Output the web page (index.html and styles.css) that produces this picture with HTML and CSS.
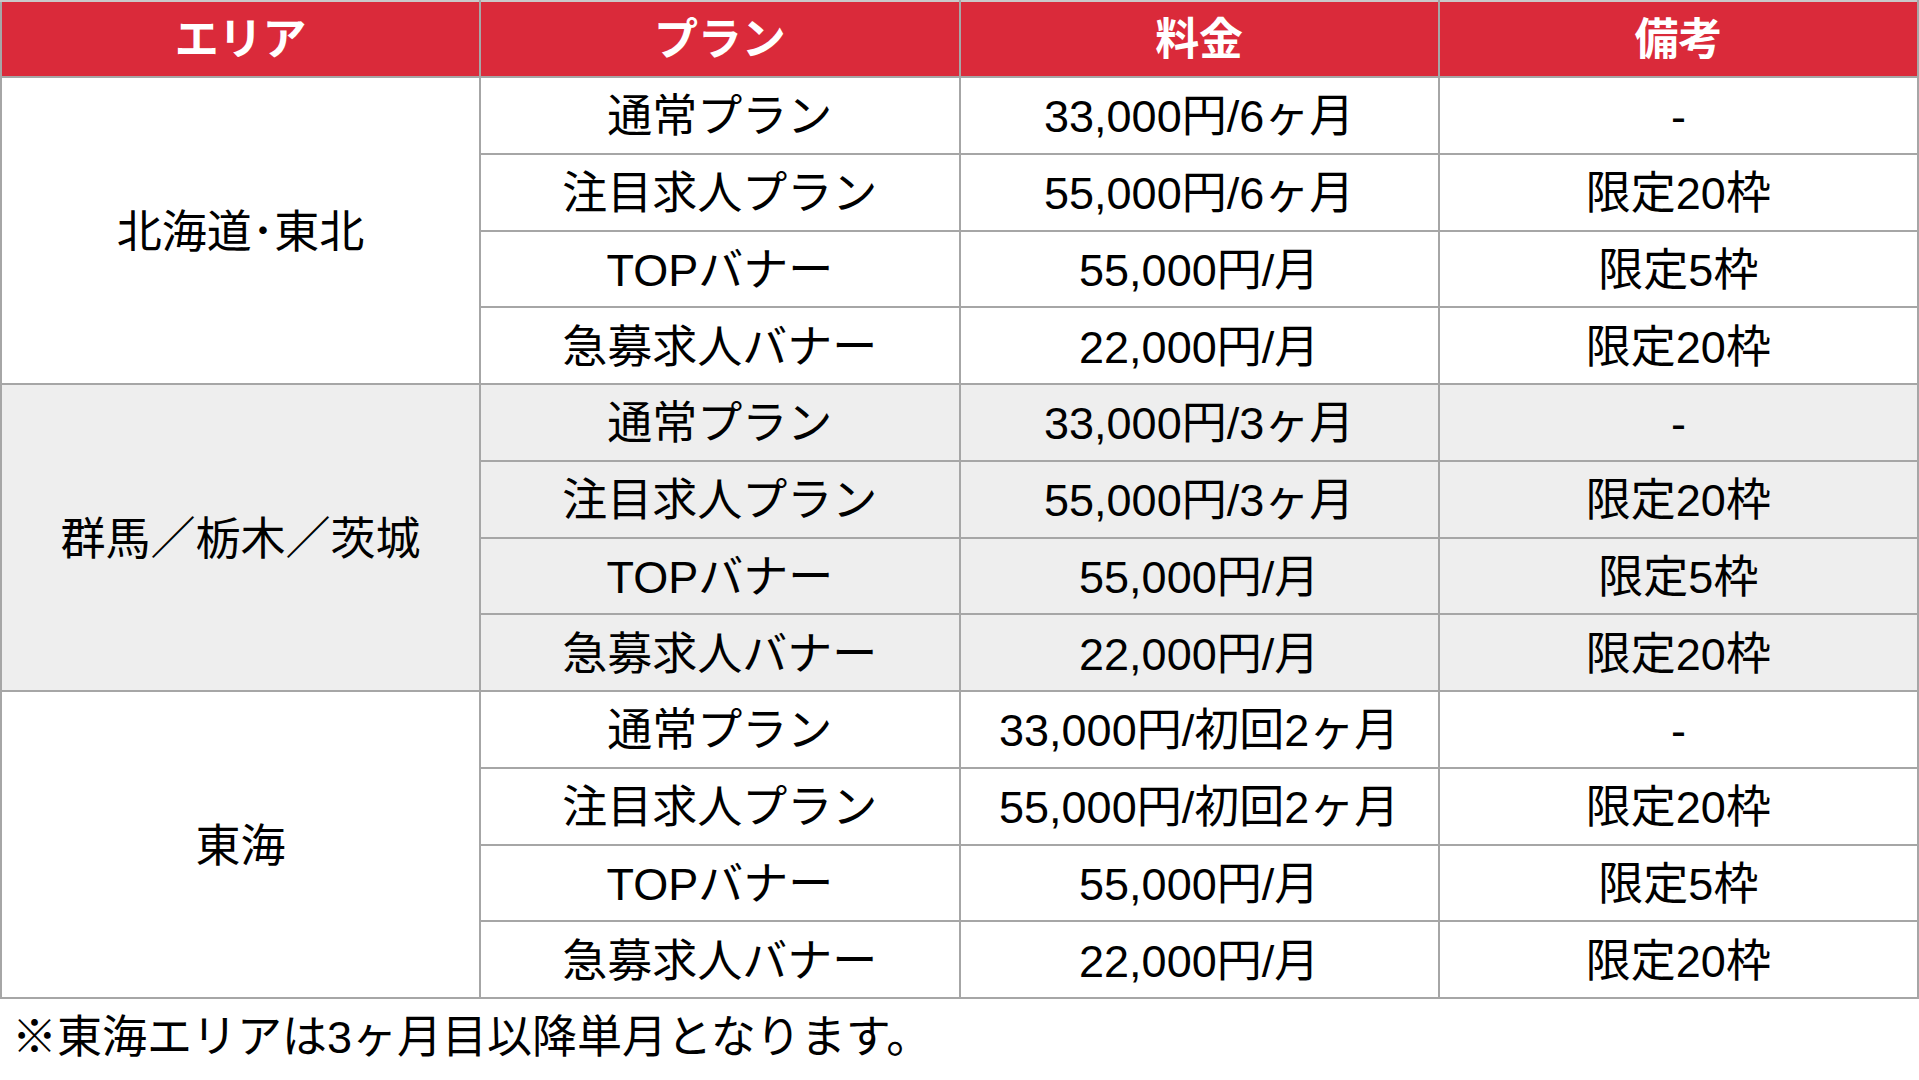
FILE: index.html
```html
<!DOCTYPE html>
<html lang="ja">
<head>
<meta charset="utf-8">
<title>料金表</title>
<link rel="stylesheet" href="styles.css">
</head>
<body>
<table class="price">
  <thead>
    <tr><th>エリア</th><th>プラン</th><th>料金</th><th>備考</th></tr>
  </thead>
  <tbody class="grp">
    <tr><td rowspan="4" class="area">北海道･東北</td><td>通常プラン</td><td>33,000円/6ヶ月</td><td>-</td></tr>
    <tr><td>注目求人プラン</td><td>55,000円/6ヶ月</td><td>限定20枠</td></tr>
    <tr><td>TOPバナー</td><td>55,000円/月</td><td>限定5枠</td></tr>
    <tr><td>急募求人バナー</td><td>22,000円/月</td><td>限定20枠</td></tr>
  </tbody>
  <tbody class="grp alt">
    <tr><td rowspan="4" class="area">群馬／栃木／茨城</td><td>通常プラン</td><td>33,000円/3ヶ月</td><td>-</td></tr>
    <tr><td>注目求人プラン</td><td>55,000円/3ヶ月</td><td>限定20枠</td></tr>
    <tr><td>TOPバナー</td><td>55,000円/月</td><td>限定5枠</td></tr>
    <tr><td>急募求人バナー</td><td>22,000円/月</td><td>限定20枠</td></tr>
  </tbody>
  <tbody class="grp">
    <tr><td rowspan="4" class="area">東海</td><td>通常プラン</td><td>33,000円/初回2ヶ月</td><td>-</td></tr>
    <tr><td>注目求人プラン</td><td>55,000円/初回2ヶ月</td><td>限定20枠</td></tr>
    <tr><td>TOPバナー</td><td>55,000円/月</td><td>限定5枠</td></tr>
    <tr><td>急募求人バナー</td><td>22,000円/月</td><td>限定20枠</td></tr>
  </tbody>
</table>
<p class="note">※東海エリアは3ヶ月目以降単月となります。</p>
</body>
</html>
```
FILE: styles.css
```css
html, body {
  margin: 0;
  padding: 0;
  background: #ffffff;
}
body {
  font-family: "Liberation Sans", "Noto Sans CJK JP", sans-serif;
  color: #000000;
}
.price {
  width: 1919px;
  border-collapse: collapse;
  table-layout: fixed;
}
.price th,
.price td {
  width: 25%;
  height: 71.75px;
  padding: 3px 0 0;
  text-align: center;
  vertical-align: middle;
  border: 2px solid #a6a6a6;
  font-size: 45px;
  line-height: 1;
  white-space: nowrap;
}
.price th {
  height: 72px;
  padding-top: 2px;
  background: #da2a3a;
  color: #ffffff;
  font-weight: 700;
  border-top-color: #c9c9c9;
  font-size: 44px;
}
.price td {
  font-weight: 400;
}
.alt td {
  background: #eeeeee;
}
.note {
  margin: 12px 0 0 12px;
  font-size: 45px;
  line-height: 1.2;
}
```
